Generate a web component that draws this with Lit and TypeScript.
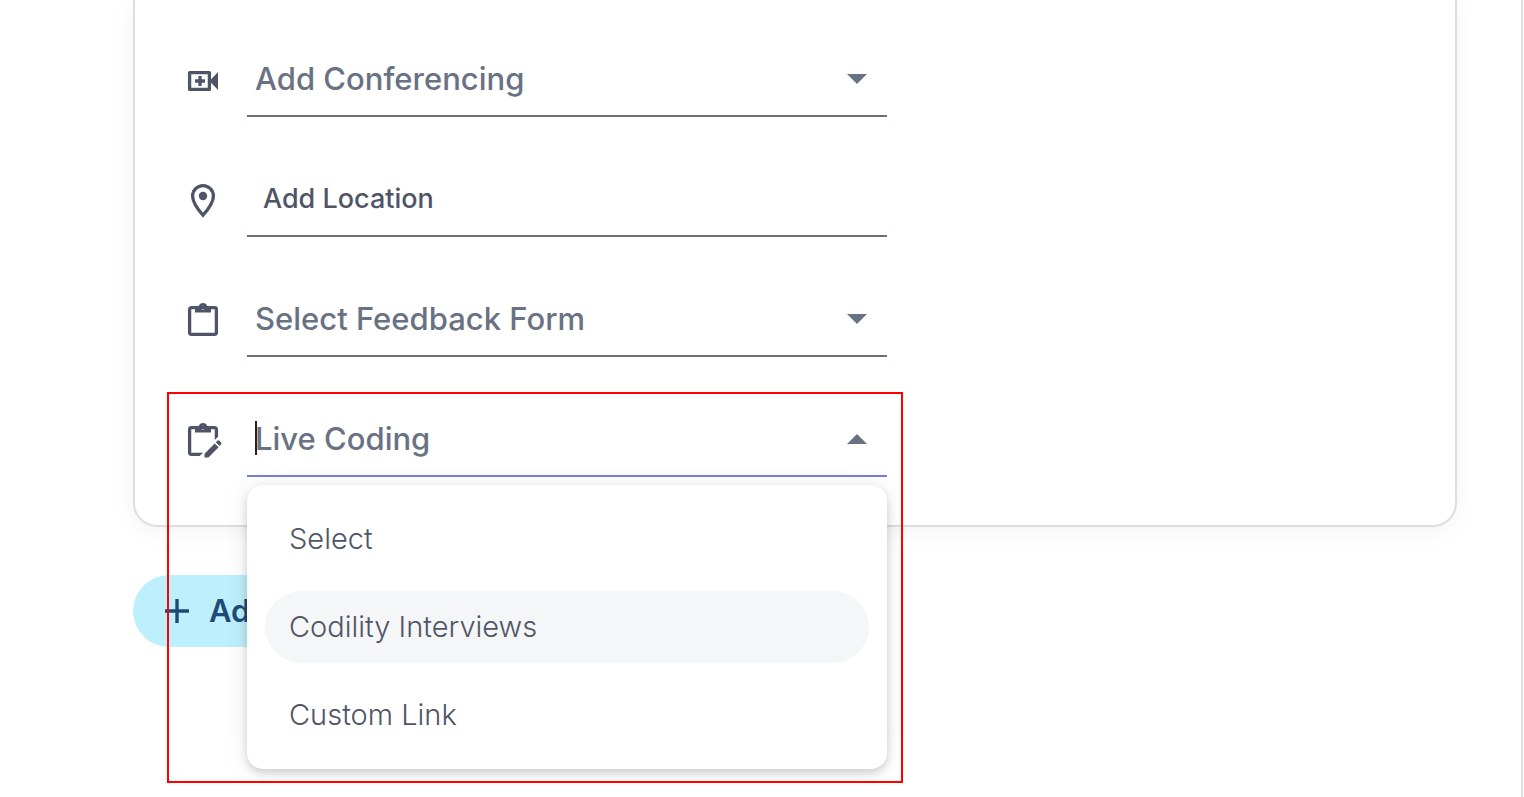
import { LitElement, html, css, svg } from "lit";
import { customElement, state } from "lit/decorators.js";

const clip = "M8 7h3.7a4.6 4.6 0 0 1 8.6 0H24v6.4H8zM16 6.8a2 2 0 1 0 0 4 2 2 0 0 0 0-4z";

const icons = {
  video: svg`
    <rect x="2.6" y="13.6" width="19.8" height="16.8" fill="none" stroke="currentColor" stroke-width="3.3" stroke-linejoin="round"/>
    <path d="M22.500 22 31 13v18z" fill="currentColor"/>
    <path d="M13 17v10M8 22h10" fill="none" stroke="currentColor" stroke-width="3.3"/>`,
  pin: svg`
    <path d="M16 36.2C9.5 29 5.6 22.5 5.6 17a10.4 10.4 0 0 1 20.8 0c0 5.500-3.900 12-10.400 19.200z" fill="none" stroke="currentColor" stroke-width="3.3"/>
    <circle cx="16" cy="17" r="4.2" fill="currentColor"/>`,
  clipboard: svg`
    <rect x="2.6" y="8.6" width="26.8" height="26.8" rx="1.8" fill="none" stroke="currentColor" stroke-width="3.3"/>
    <path fill-rule="evenodd" fill="currentColor" d=${clip} />`,
  clipboardEdit: svg`
    <path d="M29.400 17V10.400a1.800 1.800 0 0 0-1.800-1.800H4.400a1.800 1.800 0 0 0-1.800 1.800v23.200a1.800 1.800 0 0 0 1.800 1.800H12.500" fill="none" stroke="currentColor" stroke-width="3.3"/>
    <path fill="currentColor" d="M27.750 16.500h3.300v1.300l-3.300 3.300zM12 33.750h4l-3.300 3.300H12z"/>
    <path fill-rule="evenodd" fill="currentColor" d=${clip} />
    <path fill="currentColor" d="M17.500 38.600v-3.900L27.700 24.400l3.900 3.900-10.200 10.300zM28.800 23.300l1.700-1.700q.8-.8 1.600 0l2 2q.8.800 0 1.600l-1.500 1.900z"/>`,
};

@customElement("app-root")
export class AppRoot extends LitElement {
  @state() private active = 1;
  private options = ["Select", "Codility Interviews", "Custom Link"];

  static styles = css`
    :host {
      display: block;
      font-family: Inter, "Liberation Sans", sans-serif;
      color: #4f5566;
      background: #fff;
    }
    * { box-sizing: border-box; }
    .page {
      height: 100vh;
      overflow: hidden;
      margin-right: 1px;
      padding: 0 64px 0 133px;
      border-right: 2px solid #dedede;
    }
    .card {
      display: flex;
      flex-direction: column;
      gap: 44px;
      padding: 41px 52px 48px;
      border: 2px solid #dedede;
      border-top: 0;
      border-radius: 0 0 24px 24px;
      box-shadow: 0 4px 24px rgba(0, 0, 0, 0.05);
    }
    .row {
      position: relative;
      display: flex;
      align-items: center;
      gap: 28px;
      width: 100%;
      max-width: 700px;
    }
    .icon { flex: none; width: 32px; height: 40px; overflow: visible; }
    .field {
      position: relative;
      flex: 1;
      display: flex;
      align-items: center;
      height: 76px;
      padding: 2px 20px 0 8px;
      border-bottom: 2px solid #697080;
    }
    .field.open { border-color: #7781cf; }
    .control {
      flex: 1;
      min-width: 0;
      height: 48px;
      margin: 0;
      padding: 0;
      border: 0;
      outline: 0;
      background: none;
      appearance: none;
      font: 500 31px/48px Inter, "Liberation Sans", sans-serif;
      color: #697282;
    }
    .control::placeholder { color: inherit; opacity: 1; }
    .control.small { padding-left: 8px; font-size: 27px; color: #4f5566; }
    .arrow { flex: none; width: 20px; height: 10px; color: #697282; pointer-events: none; }
    .caret {
      position: absolute;
      left: 8px;
      top: 20px;
      width: 2px;
      height: 34px;
      background: #222;
    }
    .menu {
      position: absolute;
      z-index: 2;
      top: calc(100% + 10px);
      left: 0;
      right: 0;
      display: flex;
      flex-direction: column;
      gap: 16px;
      padding: 18px;
      border-radius: 16px;
      background: #fff;
      box-shadow: 0 4px 8px rgba(0, 0, 0, 0.16), 0 0 28px rgba(0, 0, 0, 0.08);
    }
    .option {
      height: 72px;
      padding: 0 24px;
      border: 0;
      border-radius: 36px;
      background: none;
      font: 300 29px/40px Inter, "Liberation Sans", sans-serif;
      color: #4f5566;
      text-align: left;
    }
    .option.active { background: #f5f6f8; }
    .highlight {
      position: absolute;
      z-index: 3;
      top: -9px;
      left: -20px;
      right: -16px;
      height: 391px;
      border: 2px solid #f00;
      pointer-events: none;
    }
    .add {
      display: flex;
      align-items: center;
      gap: 20px;
      height: 72px;
      margin-top: 48px;
      padding: 0 32px;
      border: 0;
      border-radius: 36px;
      background: #bdf0fc;
      color: #1f4a78;
      font: 600 31px/40px Inter, "Liberation Sans", sans-serif;
    }
    .plus { width: 24px; height: 24px; }
  `;

  private icon(shape: unknown) {
    return html`<svg class="icon" viewBox="0 0 32 40" aria-hidden="true">${shape}</svg>`;
  }

  private arrow(up = false) {
    return html`<svg class="arrow" viewBox="0 0 20 10" aria-hidden="true">
      <path d=${up ? "M0 10 10 0l10 10z" : "M0 0l10 10L20 0z"} fill="currentColor" />
    </svg>`;
  }

  private selectRow(shape: unknown, label: string) {
    return html`<div class="row">
      ${this.icon(shape)}
      <div class="field">
        <select class="control" aria-label=${label}><option>${label}</option></select>
        ${this.arrow()}
      </div>
    </div>`;
  }

  render() {
    return html`<main class="page">
      <section class="card">
        ${this.selectRow(icons.video, "Add Conferencing")}
        <div class="row">
          ${this.icon(icons.pin)}
          <div class="field">
            <input class="control small" aria-label="Add Location" placeholder="Add Location" />
          </div>
        </div>
        ${this.selectRow(icons.clipboard, "Select Feedback Form")}
        <div class="row">
          ${this.icon(icons.clipboardEdit)}
          <div class="field open">
            <input class="control" role="combobox" aria-expanded="true" aria-controls="coding-menu"
              aria-label="Live Coding" placeholder="Live Coding" />
            <span class="caret"></span>
            ${this.arrow(true)}
            <div class="menu" id="coding-menu" role="listbox" aria-label="Live Coding">
              ${this.options.map(
                (name, i) => html`<button type="button" role="option"
                  class="option ${i === this.active ? "active" : ""}"
                  aria-selected=${i === this.active}
                  @mouseenter=${() => (this.active = i)}>${name}</button>`
              )}
            </div>
          </div>
          <div class="highlight"></div>
        </div>
      </section>
      <button type="button" class="add">
        <svg class="plus" viewBox="0 0 24 24" aria-hidden="true">
          <path d="M12 0v24M0 12h24" stroke="currentColor" stroke-width="3.4" />
        </svg>
        Add
      </button>
    </main>`;
  }
}
